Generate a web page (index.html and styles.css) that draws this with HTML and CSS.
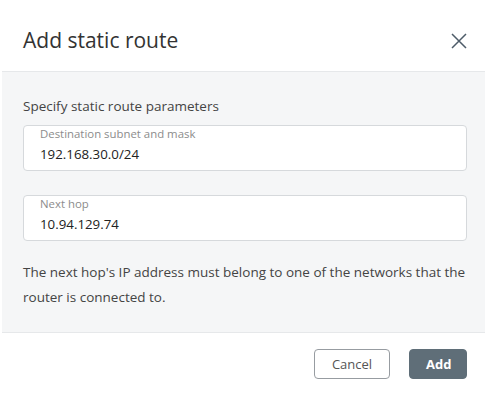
FILE: index.html
```html
<!DOCTYPE html>
<html>
<head>
<meta charset="utf-8">
<link rel="stylesheet" href="styles.css">
</head>
<body>
<div class="dialog">
  <div class="header">
    <h1 class="title">Add static route</h1>
    <button class="close" aria-label="Close">
      <svg width="16" height="16" viewBox="0 0 16 16"><path d="M1 1L15 15M15 1L1 15" stroke="#4e5c69" stroke-width="1.5" fill="none"/></svg>
    </button>
  </div>
  <div class="content">
    <p class="intro">Specify static route parameters</p>
    <div class="field">
      <span class="label">Destination subnet and mask</span>
      <span class="value">192.168.30.0/24</span>
    </div>
    <div class="field field-last">
      <span class="label">Next hop</span>
      <span class="value">10.94.129.74</span>
    </div>
    <p class="note">The next hop's IP address must belong to one of the networks that the router is connected to.</p>
  </div>
  <div class="footer">
    <button class="btn btn-cancel">Cancel</button>
    <button class="btn btn-add">Add</button>
  </div>
</div>
</body>
</html>
```
FILE: styles.css
```css
html, body {
  margin: 0;
  padding: 0;
  background: #ffffff;
}
body {
  font-family: "Open Sans", "Liberation Sans", sans-serif;
  color: #333;
}
.dialog {
  width: 491px;
  height: 414px;
  display: flex;
  flex-direction: column;
}
.header {
  height: 71px;
  box-sizing: border-box;
  padding: 26px 24px 0 23px;
  display: flex;
  justify-content: space-between;
  align-items: flex-start;
}
.title {
  margin: 0;
  font-size: 21px;
  font-weight: 400;
  line-height: 28px;
  color: #333;
}
.close {
  border: 0;
  background: none;
  padding: 0;
  margin-top: 7px;
  width: 16px;
  height: 16px;
  display: block;
}
.close svg { display: block; }
.content {
  margin: 0 6px 0 2px;
  background: #f5f6f7;
  border-top: 1px solid #e6e8ea;
  border-bottom: 1px solid #e6e8ea;
  padding: 22px 18px 22px 21px;
  display: flex;
  flex-direction: column;
}
.intro {
  margin: 0 0 7px;
  font-size: 13.5px;
  line-height: 24px;
  color: #444;
}
.field {
  background: #fff;
  border: 1px solid #d6d9dc;
  border-radius: 4px;
  height: 46px;
  box-sizing: border-box;
  padding: 1px 16px 0;
  display: flex;
  flex-direction: column;
  margin-bottom: 24px;
}
.field-last {
  margin-bottom: 19px;
}
.label {
  font-size: 11.4px;
  line-height: 14px;
  color: #8c8c8c;
}
.value {
  margin-top: 4px;
  font-size: 13.3px;
  line-height: 18px;
  color: #222;
}
.note {
  margin: 0;
  font-size: 13.5px;
  line-height: 25px;
  color: #444;
}
.footer {
  margin: 0 6px 0 2px;
  padding: 16px 18px 0 0;
  display: flex;
  justify-content: flex-end;
  gap: 19px;
}
.btn {
  height: 30px;
  box-sizing: border-box;
  border-radius: 4px;
  font-family: "Open Sans", "Liberation Sans", sans-serif;
  font-size: 13px;
  padding: 0 16px;
  cursor: pointer;
}
.btn-cancel {
  width: 76px;
  background: #fff;
  border: 1px solid #979ca1;
  color: #555;
}
.btn-add {
  width: 58px;
  background: #5f6e78;
  border: 1px solid #5f6e78;
  color: #fff;
  font-weight: 700;
}
```
